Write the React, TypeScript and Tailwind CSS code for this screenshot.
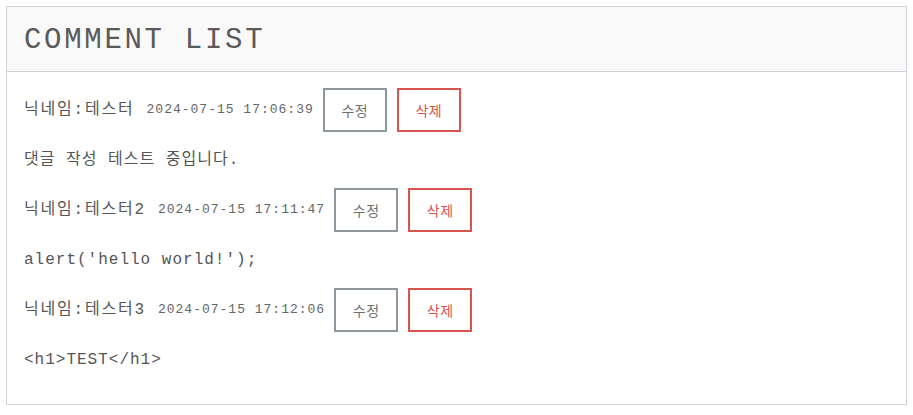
import React from "react";

const comments = [
  { nick: "테스터", date: "2024-07-15 17:06:39", body: "댓글 작성 테스트 중입니다." },
  { nick: "테스터2", date: "2024-07-15 17:11:47", body: "alert('hello world!');" },
  { nick: "테스터3", date: "2024-07-15 17:12:06", body: "<h1>TEST</h1>" },
];

const mono = "font-['Liberation_Mono','Courier_New','Noto_Sans_CJK_KR',monospace]";

export default function App() {
  return (
    <div className={`m-[6px] border border-[#ced4da] bg-white text-[#555] tracking-[1px] ${mono}`}>
      <div className="flex h-[65px] items-center border-b border-[#ced4da] bg-[#f9f9f9] px-[17px]">
        <h2 className="pt-[2px] text-[29px] leading-none font-normal tracking-[2.7px] text-[#5a5a5a]">COMMENT LIST</h2>
      </div>
      <div className="px-[17px] pt-4 pb-4">
        {comments.map((c, i) => (
          <div key={i}>
            <div className="flex h-[44px] items-center">
              <span className="text-[16px] tracking-[1.8px] text-[#555]">닉네임:{c.nick}</span>
              <span className="ml-[12px] text-[13px] text-[#666]">{c.date}</span>
              <button className="ml-[9px] flex h-[44px] w-[64px] items-center justify-center border-2 border-[#8f979e] bg-white font-['Noto_Sans_CJK_KR',sans-serif] text-[14px] font-normal tracking-[0.5px] text-[#6f6f6f]">
                수정
              </button>
              <button className="ml-[10px] flex h-[44px] w-[64px] items-center justify-center border-2 border-[#d9534f] bg-white font-['Noto_Sans_CJK_KR',sans-serif] text-[14px] font-normal tracking-[0.5px] text-[#d9534f]">
                삭제
              </button>
            </div>
            <p className="my-4 h-[24px] text-[16px] leading-[24px] text-[#555]">{c.body}</p>
          </div>
        ))}
      </div>
    </div>
  );
}
